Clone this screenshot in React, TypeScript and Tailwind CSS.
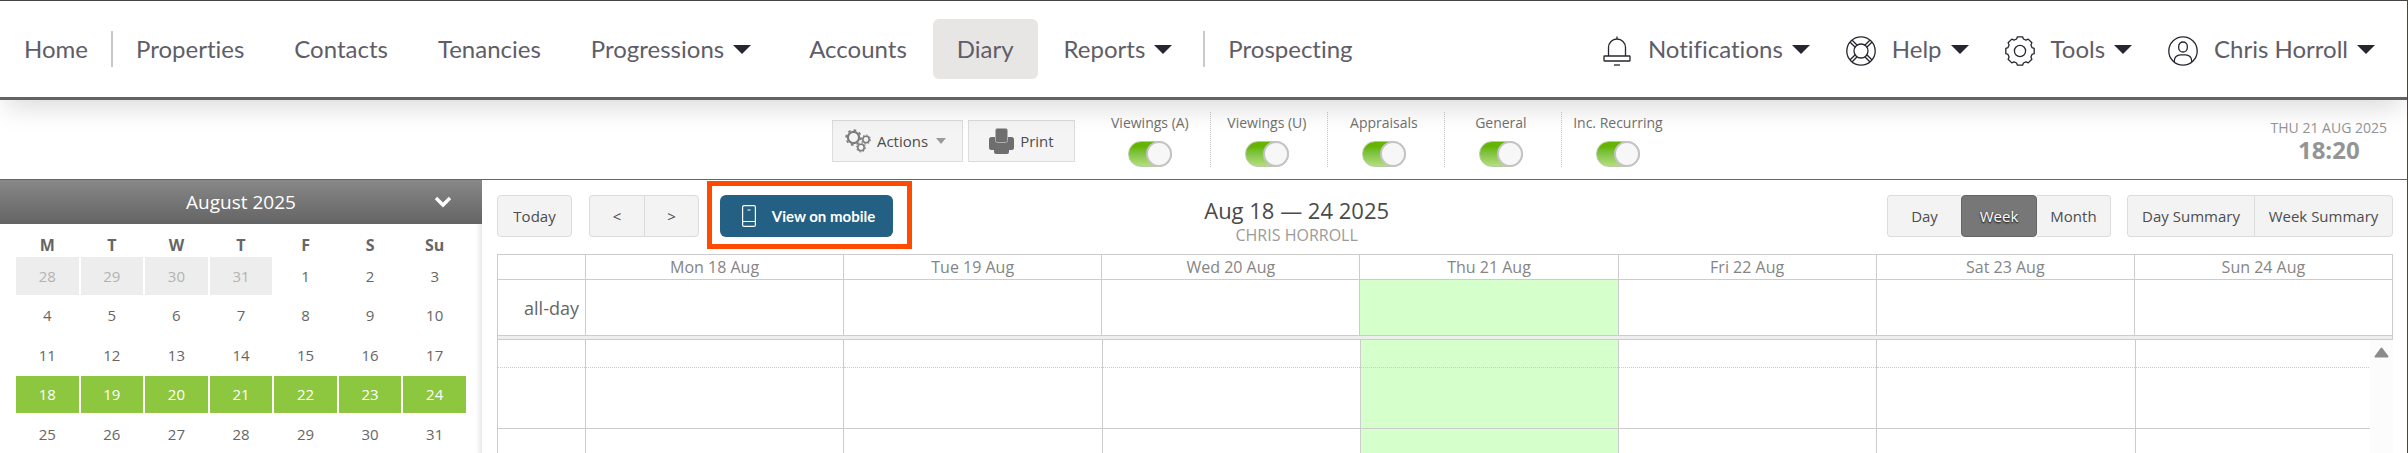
import type { ReactNode } from "react";
import clsx from "clsx";

const filters = ["Viewings (A)", "Viewings (U)", "Appraisals", "General", "Inc. Recurring"];

const weekdays = ["M", "T", "W", "T", "F", "S", "Su"];

const weeks = [
  [28, 29, 30, 31, 1, 2, 3],
  [4, 5, 6, 7, 8, 9, 10],
  [11, 12, 13, 14, 15, 16, 17],
  [18, 19, 20, 21, 22, 23, 24],
  [25, 26, 27, 28, 29, 30, 31],
];

const days = [
  "Mon 18 Aug",
  "Tue 19 Aug",
  "Wed 20 Aug",
  "Thu 21 Aug",
  "Fri 22 Aug",
  "Sat 23 Aug",
  "Sun 24 Aug",
];
const today = 3;

function Caret() {
  return (
    <svg viewBox="0 0 18 9" className="mr-2 ml-[9px] h-[9px] w-[18px] shrink-0" aria-hidden="true">
      <path d="M0 0h18L9 9z" fill="#272630" />
    </svg>
  );
}

function NavLink({
  children,
  caret,
  active,
}: {
  children: ReactNode;
  caret?: boolean;
  active?: boolean;
}) {
  return (
    <a
      href="#"
      className={clsx(
        "flex h-[60px] items-center rounded-md px-6 whitespace-nowrap",
        active && "bg-[#e8e6e4]",
      )}
      aria-current={active ? "page" : undefined}
    >
      {children}
      {caret && <Caret />}
    </a>
  );
}

function NavDivider() {
  return <div className="-mx-[3px] h-9 w-0.5 bg-[#c9c9cb]" />;
}

function UserLink({ icon, children }: { icon: ReactNode; children: ReactNode }) {
  return (
    <a href="#" className="flex items-center whitespace-nowrap">
      <svg
        viewBox="0 0 30 30"
        className="mt-1 mr-4 size-[30px] shrink-0"
        fill="none"
        stroke="#272630"
        strokeWidth="1.3"
        aria-hidden="true"
      >
        {icon}
      </svg>
      {children}
      <Caret />
    </a>
  );
}

const bellIcon = (
  <>
    <path d="M15 0.5v3M6.5 20v-8.5a8.5 8.5 0 0 1 17 0V20" />
    <rect x="2" y="20" width="26" height="5" rx="0.5" />
    <path d="M12 29h6" />
  </>
);

const helpIcon = (
  <>
    <circle cx="15" cy="15" r="14.2" />
    <circle cx="15" cy="15" r="7" />
    <path d="M4.2 6.2l5 5M6.2 4.2l5 5M23.8 4.2l-5 5M25.8 6.2l-5 5M4.2 23.8l5-5M6.2 25.8l5-5M25.8 23.8l-5-5M23.8 25.8l-5-5" />
  </>
);

const gearIcon = (
  <>
    <path
      strokeLinejoin="round"
      d="M12.4 0.8h5.2l0.8 2.2 2.6 1.1 2.2-1 3.7 3.7-1 2.2 1.1 2.6 2.2 0.8v5.2l-2.2 0.8-1.1 2.6 1 2.2-3.7 3.7-2.2-1-2.6 1.1-0.8 2.2h-5.2l-0.8-2.2-2.6-1.1-2.2 1-3.7-3.7 1-2.2-1.1-2.6-2.2-0.8v-5.2l2.2-0.8 1.1-2.6-1-2.2 3.7-3.7 2.2 1 2.6-1.1z"
    />
    <circle cx="15" cy="15" r="5.6" />
  </>
);

const userIcon = (
  <>
    <circle cx="15" cy="15" r="14.2" />
    <rect x="10.7" y="6" width="8.6" height="10" rx="4.3" />
    <path d="M6.3 26v-1.2a6 6 0 0 1 6-6h5.4a6 6 0 0 1 6 6V26" />
  </>
);

function GearsIcon() {
  return (
    <svg viewBox="0 0 26 24" className="h-6 w-[26px]" fill="none" stroke="#7c7c7c" aria-hidden="true">
      <circle cx="8.5" cy="8.5" r="5.6" strokeWidth="2.2" />
      <circle cx="8.5" cy="8.5" r="7.4" strokeWidth="1.6" strokeDasharray="2.6 3.2" />
      <circle cx="21" cy="10.5" r="3.2" strokeWidth="1.6" />
      <circle cx="21" cy="10.5" r="4.5" strokeWidth="1" strokeDasharray="1.6 1.9" />
      <circle cx="16" cy="18.5" r="3.2" strokeWidth="1.6" />
      <circle cx="16" cy="18.5" r="4.5" strokeWidth="1" strokeDasharray="1.6 1.9" />
    </svg>
  );
}

function PrinterIcon() {
  return (
    <svg viewBox="0 0 25 26" className="h-[26px] w-[25px]" fill="#6e6e6e" aria-hidden="true">
      <rect y="9" width="25" height="13" rx="2.5" />
      <rect x="5" y="17" width="15" height="9" rx="2" />
      <rect x="6.5" y="0.5" width="12" height="14" rx="2" stroke="#b0b0b0" strokeWidth="1" />
    </svg>
  );
}

function GroupButton({
  children,
  active,
  className,
}: {
  children: ReactNode;
  active?: boolean;
  className?: string;
}) {
  return (
    <button
      type="button"
      aria-pressed={active}
      className={clsx(
        "h-[42px] border text-center text-[15px] whitespace-nowrap",
        active
          ? "rounded-sm border-[#666] bg-[#777] text-white text-shadow-[0_1px_2px_#000]"
          : "border-[#dcdcdc] bg-[#f3f3f3] text-[#4d4d4d]",
        className,
      )}
    >
      {children}
    </button>
  );
}

function Header() {
  return (
    <header className="relative z-10 flex h-[100px] items-center justify-between border-t border-b-[3px] border-t-[#444] border-b-[#636363] bg-white pr-6 font-[Lato,sans-serif] text-2xl text-[#5f5d68] shadow-[0_14px_24px_-6px_rgba(0,0,0,0.14)] [font-variant-ligatures:none]">
      <nav className="flex items-center gap-0.5">
        <NavLink>Home</NavLink>
        <NavDivider />
        <NavLink>Properties</NavLink>
        <NavLink>Contacts</NavLink>
        <NavLink>Tenancies</NavLink>
        <NavLink caret>Progressions</NavLink>
        <NavLink>Accounts</NavLink>
        <NavLink active>Diary</NavLink>
        <NavLink caret>Reports</NavLink>
        <NavDivider />
        <NavLink>Prospecting</NavLink>
      </nav>
      <nav className="flex items-center gap-7">
        <UserLink icon={bellIcon}>Notifications</UserLink>
        <UserLink icon={helpIcon}>Help</UserLink>
        <UserLink icon={gearIcon}>Tools</UserLink>
        <UserLink icon={userIcon}>Chris Horroll</UserLink>
      </nav>
    </header>
  );
}

function Toolbar() {
  return (
    <div className="grid h-20 grid-cols-[20fr_auto_17fr] border-b border-[#666] pr-5">
      <div />
      <div className="flex items-start pt-3">
        <button
          type="button"
          className="mt-2 flex h-[42px] w-[131px] items-center border border-[#dcdcdc] bg-[#f4f4f4] pl-3 text-[15px] text-[#4d4d4d]"
        >
          <GearsIcon />
          <span className="ml-1.5">Actions</span>
          <svg viewBox="0 0 10 6" className="ml-2 h-1.5 w-2.5" aria-hidden="true">
            <path d="M0 0h10L5 6z" fill="#9a9a9a" />
          </svg>
        </button>
        <button
          type="button"
          className="mt-2 ml-[5px] flex h-[42px] w-[107px] items-center justify-center gap-1.5 border border-[#dcdcdc] bg-[#f4f4f4] text-[15px] text-[#4d4d4d]"
        >
          <PrinterIcon />
          Print
        </button>
        <div className="mr-0.5 ml-[18px] flex">
          {filters.map((f) => (
            <label
              key={f}
              className="flex h-[55px] w-[117px] flex-col items-center gap-2 border-l border-dotted border-[#c4c4c4] pr-1 text-sm leading-[21px] text-[#707070] first:border-transparent"
            >
              {f}
              <input
                type="checkbox"
                role="switch"
                defaultChecked
                className="relative h-[26px] w-11 appearance-none rounded-full border border-[#b9c9a5] bg-linear-to-b from-[#65b500] from-20% to-[#b3de7c] before:absolute before:-top-px before:-right-px before:size-[26px] before:rounded-full before:border-2 before:border-[#c4c4c4] before:bg-[#f7f7f7]"
              />
            </label>
          ))}
        </div>
      </div>
      <div className="flex flex-col items-center justify-self-end pt-[18px] text-[#949494]">
        <span className="text-sm leading-5">THU 21 AUG 2025</span>
        <span className="text-2xl leading-6 font-bold">18:20</span>
      </div>
    </div>
  );
}

function MiniCalendar() {
  return (
    <aside className="w-[482px] shrink-0 bg-white">
      <div className="relative flex h-11 items-center justify-center bg-linear-to-b from-[#888] to-[#646464] text-[19px] text-white">
        August 2025
        <button type="button" aria-label="Choose month" className="absolute right-7 p-0.5">
          <svg viewBox="0 0 18 12" className="h-3 w-[18px]" aria-hidden="true">
            <path d="M2 2l7 7 7-7" fill="none" stroke="#fff" strokeWidth="3.4" />
          </svg>
        </button>
      </div>
      <div className="bg-linear-to-l from-[#e9e9e9] to-white to-[6px] px-3.5 pt-[9px]">
        <table className="w-full table-fixed border-separate border-spacing-0.5 text-center text-[15px] text-[#666]">
          <thead>
            <tr className="h-5">
              {weekdays.map((d, i) => (
                <th key={i} className="p-0 text-base leading-5">
                  {d}
                </th>
              ))}
            </tr>
          </thead>
          <tbody>
            {weeks.map((week, row) => (
              <tr key={row} className="h-[38px] even:h-[37px]">
                {week.map((day) => (
                  <td
                    key={day}
                    className={clsx(
                      "p-0",
                      row === 0 && day > 7 && "bg-[#ededed] text-[#b3b3b3]",
                      row === 3 && "bg-[#8dc63f] text-white",
                    )}
                  >
                    {day}
                  </td>
                ))}
              </tr>
            ))}
          </tbody>
        </table>
      </div>
    </aside>
  );
}

function DiaryControls() {
  return (
    <div className="flex items-start">
      <GroupButton className="w-[75px] rounded-sm">Today</GroupButton>
      <div className="ml-[17px] flex">
        <GroupButton className="w-[55px] rounded-l-sm border-r-0">&lt;</GroupButton>
        <GroupButton className="w-[55px] rounded-r-sm">&gt;</GroupButton>
      </div>
      <div className="relative ml-[21px]">
        <button
          type="button"
          className="flex h-[42px] w-[173px] items-center justify-center gap-4 rounded-md bg-[#236083] pl-1 font-[Lato,sans-serif] text-[15px] font-bold whitespace-nowrap text-white"
        >
          <svg
            viewBox="0 0 14 22"
            className="h-[22px] w-3.5"
            fill="none"
            stroke="#fff"
            strokeWidth="1.2"
            aria-hidden="true"
          >
            <rect x="0.6" y="0.6" width="12.8" height="20.8" rx="1.5" />
            <path d="M0.6 16.5h12.8M5.5 5h3" />
          </svg>
          View on mobile
        </button>
        <div className="pointer-events-none absolute -top-3.5 -right-[19px] -bottom-3 -left-[13px] border-5 border-[#ff4a00]" />
      </div>
      <div className="flex-5" />
      <div className="flex flex-col items-center">
        <h1 className="text-[22px] leading-[30px] text-[#4a4a4a]">Aug 18 — 24 2025</h1>
        <p className="text-base leading-5 text-[#9b9b9b]">CHRIS HORROLL</p>
      </div>
      <div className="flex-8" />
      <div className="flex">
        <GroupButton className="w-[74px] rounded-l-sm border-r-0">Day</GroupButton>
        <GroupButton active className="w-[76px]">
          Week
        </GroupButton>
        <GroupButton className="w-[74px] rounded-r-sm border-l-0">Month</GroupButton>
      </div>
      <div className="ml-4 flex">
        <GroupButton className="w-[127px] rounded-l-sm border-r-0">Day Summary</GroupButton>
        <GroupButton className="w-[139px] rounded-r-sm">Week Summary</GroupButton>
      </div>
    </div>
  );
}

function WeekGrid() {
  const slots = [
    "h-7 border-b border-dotted border-b-[#ccc]",
    "h-[61px] border-b border-b-[#ccc]",
    "h-6",
  ];

  return (
    <div className="mt-[9px]">
      <table className="w-full table-fixed border-separate border-spacing-0 border-t border-r border-[#ccc]">
        <thead>
          <tr className="h-[25px] text-base leading-6 text-[#858585]">
            <th className="w-[88px] border-b border-l border-[#ccc] p-0" />
            {days.map((d) => (
              <th key={d} scope="col" className="border-b border-l border-[#ccc] p-0 font-normal">
                {d}
              </th>
            ))}
          </tr>
        </thead>
        <tbody>
          <tr className="h-14">
            <th
              scope="row"
              className="border-b border-l border-[#ccc] p-0 pr-1.5 text-right text-lg font-normal text-[#666]"
            >
              all-day
            </th>
            {days.map((d, i) => (
              <td
                key={d}
                className={clsx(
                  "border-b border-l border-[#ccc] p-0",
                  i === today && "bg-[#d5ffcb]",
                )}
              />
            ))}
          </tr>
        </tbody>
      </table>
      <div className="h-1 border-x border-b border-[#ccc] bg-[#eee]" />
      <div className="relative">
        <table className="w-full table-fixed border-separate border-spacing-0">
          <tbody>
            {slots.map((slot) => (
              <tr key={slot}>
                <td className="w-[88px] border-l border-l-[#ccc] p-0">
                  <div className={slot} />
                </td>
                {days.map((d, i) => (
                  <td
                    key={d}
                    className={clsx(
                      "border-l border-l-[#ccc] p-0",
                      i === today && "bg-[#d5ffcb]",
                    )}
                  >
                    <div className={slot} />
                  </td>
                ))}
              </tr>
            ))}
          </tbody>
        </table>
        {/* scrollbar */}
        <div className="absolute inset-y-0 right-0 w-[23px] bg-[#fcfcfc] pt-[7px]">
          <svg viewBox="0 0 15 11" className="mx-auto h-[11px] w-[15px]" aria-hidden="true">
            <path
              d="M7.5 1.5L13.5 9.5H1.5z"
              fill="#8b8b8b"
              stroke="#8b8b8b"
              strokeWidth="2"
              strokeLinejoin="round"
            />
          </svg>
        </div>
      </div>
    </div>
  );
}

export default function App() {
  return (
    <div className="border-r border-[#4d4540] bg-white font-['Open_Sans',sans-serif]">
      <Header />
      <Toolbar />
      <div className="flex">
        <MiniCalendar />
        <main className="min-w-0 flex-1 pt-[15px] pr-3.5 pl-[15px]">
          <DiaryControls />
          <WeekGrid />
        </main>
      </div>
    </div>
  );
}
